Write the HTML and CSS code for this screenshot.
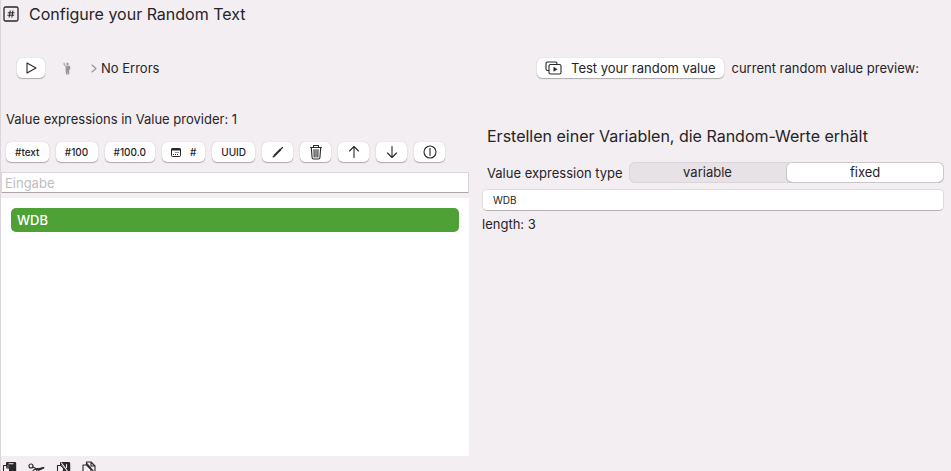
FILE: index.html
```html
<!DOCTYPE html>
<html lang="en">
<head>
<meta charset="utf-8">
<title>Configure your Random Text</title>
<link rel="stylesheet" href="styles.css">
</head>
<body>
<header class="titlebar">
  <svg class="title-icon" width="16" height="16" viewBox="0 0 16 16" aria-hidden="true"><rect x="1" y="1" width="14" height="14" rx="1.500"/><path class="hash" d="M7.200 4.800 6.200 11.200M9.900 4.800l-1 6.400M5.200 6.800h6M4.800 9.200h6"/></svg>
  <h1>Configure your Random Text</h1>
</header>

<div class="actions">
  <div class="status">
    <button class="btn run" type="button" aria-label="Run"><svg width="12" height="12" viewBox="0 0 12 12"><path d="M2 1v10l9-5z"/></svg></button>
    <svg class="figure" width="8" height="13" viewBox="0 0 8 13" aria-hidden="true"><circle cx="4.500" cy="2" r="1.200"/><path d="M.6.700v2l2 1.700v3.100L3 12.500h1.400L4.600 9l.3 3.500h1.300V8l1-.4V4.600L6.300 3.700H3L1.600 2.400V.7z"/></svg>
    <svg class="chevron" width="6" height="9" viewBox="0 0 6 9" aria-hidden="true"><path d="m1 1 4 3.500L1 8"/></svg>
    <span>No Errors</span>
  </div>
  <div class="preview">
    <button class="btn test" type="button">
      <svg width="18" height="14" viewBox="0 0 18 14" aria-hidden="true"><path d="M3.500 9.500H2.500A1.500 1.500 0 0 1 1 8V2.500A1.500 1.500 0 0 1 2.500 1h8A1.500 1.500 0 0 1 12 2.500v1"/><rect x="4" y="3.500" width="12" height="9.500" rx="1.500"/><path class="solid" d="M8.500 5.700v5.100l4-2.550z"/></svg>
      Test your random value
    </button>
    <span>current random value preview:</span>
  </div>
</div>

<main class="columns">
  <section class="provider">
    <p class="caption">Value expressions in Value provider: 1</p>
    <div class="toolbar">
      <button class="btn small" type="button">#text</button>
      <button class="btn small" type="button">#100</button>
      <button class="btn small" type="button">#100.0</button>
      <button class="btn small date" type="button" aria-label="Date number"><svg width="10" height="9" viewBox="0 0 10 9"><rect x=".5" y=".5" width="9" height="8" rx="1"/><path class="head" d="M1 1.500h8"/><path class="dots" d="M4.500 4.500h3.500M2 6.500h5"/></svg>#</button>
      <button class="btn small" type="button">UUID</button>
      <button class="btn tool" type="button" aria-label="Edit"><svg width="12" height="12" viewBox="0 0 12 12"><path class="pencil" d="m2 10 7-7"/><path d="m1 11 1.500-1M9.500 2.500l1-1"/></svg></button>
      <button class="btn tool" type="button" aria-label="Delete"><svg width="14" height="16" viewBox="0 0 14 16"><path d="M1.500 3.500h11M4.500 3.500v-2h5v2M2.300 3.500l.8 10.300q.1 1.200 1.300 1.200h5.200q1.200 0 1.300-1.200l.8-10.300M5 5.500l.2 7.500M7 5.500V13M9 5.500 8.800 13"/></svg></button>
      <button class="btn tool" type="button" aria-label="Move up"><svg width="12" height="14" viewBox="0 0 12 14"><path d="M6 12.500V1.500M1.500 6 6 1.500 10.500 6"/></svg></button>
      <button class="btn tool" type="button" aria-label="Move down"><svg width="12" height="14" viewBox="0 0 12 14"><path d="M6 1.500v11M1.500 8 6 12.500 10.500 8"/></svg></button>
      <button class="btn tool" type="button" aria-label="Details"><svg width="14" height="14" viewBox="0 0 14 14"><circle cx="7" cy="7" r="6"/><path d="M7 3.500v7"/></svg></button>
    </div>
    <input class="entry" type="text" placeholder="Eingabe" aria-label="Eingabe">
    <ul class="values">
      <li class="selected">WDB</li>
    </ul>
  </section>

  <section class="details">
    <h2>Erstellen einer Variablen, die Random-Werte erhält</h2>
    <div class="type" role="radiogroup" aria-labelledby="type-label">
      <span id="type-label">Value expression type</span>
      <div class="segments">
        <label><input type="radio" name="type"><span>variable</span></label>
        <label><input type="radio" name="type" checked><span>fixed</span></label>
      </div>
    </div>
    <input class="fixed-value" type="text" value="WDB" aria-label="Fixed value">
    <p class="length">length: 3</p>
  </section>
</main>

<footer class="clipboard">
  <button type="button" aria-label="Paste"><svg width="15" height="15" viewBox="0 0 15 15"><path class="solid" d="M4 2q0-1 1-1h8q1.200 0 1.200 1.200V13H8V6.500L5.800 4H4z"/><path class="cut" d="M7 2.700h4"/><path class="sheet" d="M1.500 4.500h3.300L7.500 7v7h-6z"/><path d="M4.800 4.500V7h2.700"/></svg></button>
  <button type="button" aria-label="Cut"><svg width="17" height="14" viewBox="0 0 17 14"><circle cx="3" cy="5" r="2"/><circle cx="7" cy="10.500" r="2"/><path d="m4.800 6 4.500 2.200 6.200-1.500M7.500 8.500l2-1"/><path class="solid" d="m8.500 7.700 8-2-.5 1.700-5.500 2.500z"/></svg></button>
  <button type="button" aria-label="Paste without format"><svg width="15" height="15" viewBox="0 0 15 15"><path class="solid" d="M4 2q0-1 1-1h8q1.200 0 1.200 1.200V13H8V6.500L5.800 4H4z"/><path class="sheet" d="M1.500 4.500h3.300L7.500 7v7h-6z"/><path class="cut" d="m5.500 2 6.500 9M10.500 3.500v3"/></svg></button>
  <button type="button" aria-label="Copy without format"><svg width="14" height="15" viewBox="0 0 14 15"><path d="M4.500 3.500V1h4.500L13 5v7H9M9 1v4h4M1 4h3.500L9 8.500V14H1zM4.500 2l8 9.500"/></svg></button>
</footer>
</body>
</html>
```

FILE: styles.css
```css
* { box-sizing: border-box; }

body {
  margin: 0;
  height: 100vh;
  overflow: hidden;
  display: flex;
  flex-direction: column;
  border-left: 1px solid #dcd6dc;
  background: #f3eef2;
  color: #262427;
  font: 13px/16px Inter, "Liberation Sans", sans-serif;
}

h1, h2, p, ul { margin: 0; padding: 0; font-weight: 400; }
h1, h2 { font-size: 16px; line-height: 20px; }

svg { display: block; flex: none; fill: none; stroke: #29272a; stroke-width: 1.1; stroke-linecap: round; stroke-linejoin: round; }
svg .solid { fill: #29272a; stroke: none; }

.titlebar { display: flex; align-items: center; gap: 10px; height: 28px; padding-left: 2px; }
.title-icon { stroke-width: 1.3; }
.hash { stroke-width: 1; }

.btn {
  display: flex;
  align-items: center;
  justify-content: center;
  height: 20px;
  padding: 0 9px;
  border: 0;
  border-radius: 5px;
  background: #fff;
  box-shadow: 0 0 1px #0004, 0 1px 1px #0004;
  color: inherit;
  font: inherit;
  white-space: nowrap;
}

.actions { display: flex; justify-content: space-between; align-items: center; height: 80px; padding: 0 32px 0 16px; }
.status, .preview { display: flex; align-items: center; }
.run { width: 28px; padding: 0; }
.figure { margin-left: 18px; fill: #99959a; stroke: none; }
.chevron { margin: 0 4px 0 20px; stroke: #969297; }
.preview { gap: 8px; }
.test { gap: 8px; padding: 0 8px; }

.columns { flex: 1; min-height: 0; display: grid; grid-template-columns: 468fr 462fr; gap: 13px; padding-right: 7px; }
.provider { display: flex; flex-direction: column; min-width: 0; padding-top: 3px; }
.caption { padding-left: 5px; }
.toolbar { display: flex; gap: 7px; padding: 15px 0 10px 5px; }
.small { min-width: 42px; font-size: 10px; font-weight: 500; }
.date { gap: 9px; }
.date svg { stroke-width: 1; }
.date .head { stroke-width: 2; }
.dots { stroke-dasharray: 1 1; stroke-linecap: butt; }
.tool { width: 31px; padding: 0; }
.pencil { stroke-width: 2; stroke-linecap: butt; }

.entry {
  width: 100%;
  height: 21px;
  padding: 0 3px;
  border: 1px solid #d9d5d9;
  border-bottom-color: #aaa6aa;
  background: #fff;
  font: inherit;
  outline: 0;
}
.entry::placeholder { color: #bfbcbf; opacity: 1; }

.values { flex: 1; margin-top: 5px; padding: 10px; background: #fff; list-style: none; }
.selected { padding: 4px 6px; border-radius: 5px; background: #4ea135; color: #fff; font-weight: 500; }

.details { min-width: 0; padding-top: 18px; }
.details h2 { padding-left: 5px; }
.type { display: flex; align-items: center; gap: 6px; margin-top: 16px; padding-left: 5px; }
.segments { flex: 1; display: flex; border-radius: 6px; background: #e7e2e6; box-shadow: inset 0 0 0 1px #dad5d9; }
.segments label { flex: 1; position: relative; text-align: center; }
.segments input { position: absolute; inset: 0; margin: 0; opacity: 0; }
.segments span { display: block; height: 21px; border-radius: 6px; line-height: 20px; }
.segments input:checked + span { background: #fff; box-shadow: inset 0 0 0 1px #cbc7cb, inset 0 -1px 0 #aaa6aa; }

.fixed-value {
  display: block;
  width: 100%;
  height: 22px;
  margin-top: 6px;
  padding: 0 10px;
  border: 1px solid #dedade;
  border-bottom-color: #b4b0b4;
  border-radius: 5px;
  background: #fff;
  color: inherit;
  font: 10px/16px Inter, "Liberation Sans", sans-serif;
  outline: 0;
}
.length { margin-top: 5px; }

.clipboard { display: flex; gap: 11px; height: 15px; padding: 5px 0 0 1px; }
.clipboard button { display: block; padding: 0; border: 0; background: none; }
.cut { stroke: #f3eef2; }
.sheet { fill: #f3eef2; }
```
